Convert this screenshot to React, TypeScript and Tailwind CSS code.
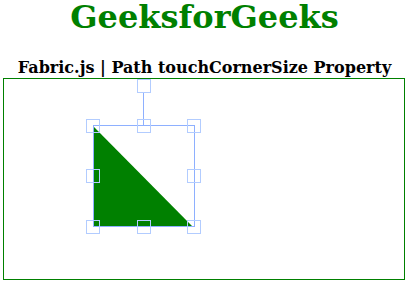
export default function App() {
  const blue = "#b2ccff";
  const sq = [
    [82.5, 40.5],
    [133.5, 40.5],
    [183.5, 40.5],
    [82.5, 90.5],
    [183.5, 90.5],
    [82.5, 141.5],
    [133.5, 141.5],
    [183.5, 141.5],
    [133.5, 0.5],
  ];
  return (
    <div
      className="flex flex-col items-center bg-white"
      style={{ fontFamily: '"DejaVu Serif", serif' }}
    >
      <h1 className="text-[32px] font-bold leading-[35px] text-[#008000]">
        GeeksforGeeks
      </h1>
      <h2 className="mt-[23px] text-[16px] font-bold leading-[20px] text-black">
        Fabric.js | Path touchCornerSize Property
      </h2>
      <div className="ml-[3px] h-[202px] w-[402px] self-start border border-[#008000]">
        <svg width="400" height="200" className="block">
          <polygon points="89,47 89,148 189,148" fill="#008000" />
          <line x1="139.5" y1="13.5" x2="139.5" y2="46.5" stroke="#8eb0ff" strokeWidth="1" />
          <rect x="89.5" y="46.5" width="101" height="101" fill="none" stroke="#8eb0ff" strokeWidth="1" />
          {sq.map(([x, y], i) => (
            <rect key={i} x={x} y={y} width="13" height="13" fill="none" stroke={blue} strokeWidth="1" />
          ))}
        </svg>
      </div>
    </div>
  );
}
